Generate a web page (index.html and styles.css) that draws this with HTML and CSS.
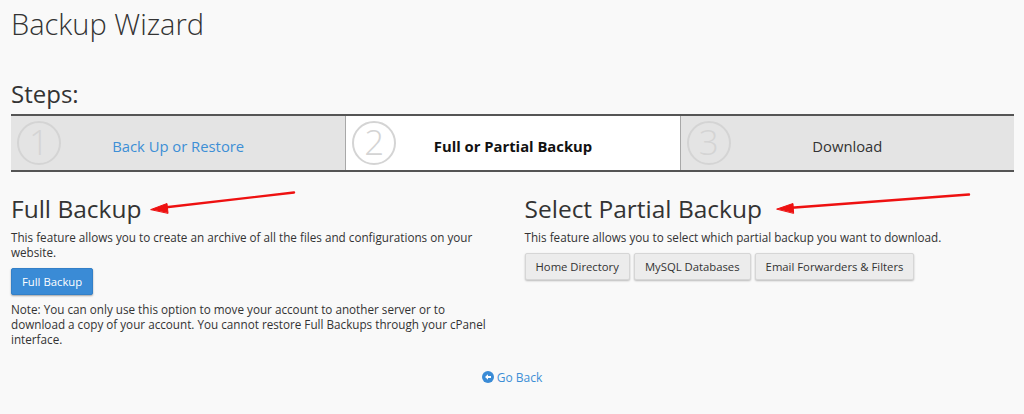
FILE: index.html
```html
<!DOCTYPE html>
<html lang="en">
<head>
<meta charset="utf-8">
<title>Backup Wizard</title>
<link rel="stylesheet" href="styles.css">
</head>
<body>
<div class="page">
  <h1 class="title">Backup Wizard</h1>
  <h2 class="steps-title">Steps:</h2>
  <div class="steps">
    <div class="step">
      <span class="num">1</span>
      <a class="step-label link" href="#">Back Up or Restore</a>
    </div>
    <div class="step active">
      <span class="num">2</span>
      <span class="step-label">Full or Partial Backup</span>
    </div>
    <div class="step">
      <span class="num">3</span>
      <span class="step-label">Download</span>
    </div>
  </div>
  <div class="cols">
    <section class="col">
      <h2 class="sec-title">Full Backup</h2>
      <p class="text">This feature allows you to create an archive of all the files and configurations on your website.</p>
      <button class="btn btn-primary">Full Backup</button>
      <p class="text note">Note: You can only use this option to move your account to another server or to download a copy of your account. You cannot restore Full Backups through your cPanel interface.</p>
    </section>
    <section class="col">
      <h2 class="sec-title">Select Partial Backup</h2>
      <p class="text">This feature allows you to select which partial backup you want to download.</p>
      <div class="btn-row">
        <button class="btn btn-default">Home Directory</button>
        <button class="btn btn-default">MySQL Databases</button>
        <button class="btn btn-default">Email Forwarders &amp; Filters</button>
      </div>
    </section>
  </div>
  <div class="back">
    <a class="link back-link" href="#"><svg class="back-icon" viewBox="0 0 16 16" width="12" height="12"><circle cx="8" cy="8" r="8" fill="#3a8bd6"/><path d="M4 8 L8 4.3 L8 6.6 L12 6.6 L12 9.4 L8 9.4 L8 11.7 Z" fill="#fff"/></svg>Go Back</a>
  </div>
</div>
<svg class="annot" width="1024" height="414" viewBox="0 0 1024 414">
  <g stroke="#ee1111" stroke-width="2.4" fill="#ee1111" stroke-linecap="round">
    <line x1="294" y1="192.5" x2="162" y2="207.8"/>
    <polygon points="151,209.5 167,203.5 168,213" stroke-width="1"/>
    <line x1="969" y1="194.5" x2="788" y2="208"/>
    <polygon points="777,209 793,203.5 793.6,213" stroke-width="1"/>
  </g>
</svg>
</body>
</html>
```
FILE: styles.css
```css
* { box-sizing: border-box; }
html, body { margin: 0; padding: 0; }
body {
  background: #f9f9f9;
  font-family: "Open Sans", "Liberation Sans", sans-serif;
  color: #333;
  width: 1024px;
  height: 414px;
  overflow: hidden;
  position: relative;
}
.page {
  padding: 0 10px 0 11px;
}
.title {
  margin: 0;
  padding-top: 3px;
  font-size: 29px;
  font-weight: 300;
  line-height: 42px;
  color: #333;
}
.steps-title {
  margin: 33px 0 0 0;
  font-size: 24px;
  font-weight: 400;
  line-height: 32px;
  color: #333;
}
.steps {
  margin-top: 4px;
  display: grid;
  grid-template-columns: 1fr 1fr 1fr;
  border-top: 2px solid #555;
  border-bottom: 2px solid #555;
  height: 58px;
}
.step {
  display: grid;
  grid-template-columns: 1fr auto 1fr;
  align-items: center;
  background: #e4e4e4;
  border-left: 1px solid #a8a8a8;
}
.step:first-child { border-left: none; }
.step.active { background: #fff; }
.num {
  grid-column: 1;
  justify-self: start;
  margin-left: 6px;
  width: 44px;
  height: 44px;
  border: 2.5px solid #d4d4d4;
  border-radius: 50%;
  color: #d4d4d4;
  font-size: 35px;
  font-weight: 300;
  line-height: 38px;
  text-align: center;
}
.step-label {
  grid-column: 2;
  font-size: 14.8px;
  color: #333;
  padding-top: 6px;
}
.step.active .step-label { font-weight: 700; color: #111; }
.link { color: #3d8fd6; text-decoration: none; }
.cols {
  display: grid;
  grid-template-columns: 1fr 1fr;
  column-gap: 24px;
  margin-top: 20px;
}
.sec-title {
  margin: 0;
  font-size: 24.5px;
  font-weight: 400;
  line-height: 34px;
  color: #333;
}
.text {
  margin: 4px 0 0 0;
  font-size: 11.7px;
  line-height: 15px;
  color: #333;
}
.btn {
  font-family: inherit;
  font-size: 11.3px;
  height: 27px;
  padding: 0 10px;
  border-radius: 2px;
  cursor: pointer;
}
.btn-primary {
  margin-top: 8px;
  background: #3a8bd6;
  color: #fff;
  border: 1px solid #3380c8;
  box-shadow: 0 1px 2px rgba(0,0,0,0.35);
}
.note { margin-top: 7px; }
.btn-row {
  display: flex;
  gap: 4px;
  margin-top: 8px;
}
.btn-default {
  background: #ececec;
  color: #333;
  border: 1px solid #d6d6d6;
  box-shadow: 0 1px 2px rgba(0,0,0,0.25);
}
.back {
  text-align: center;
  margin-top: 19px;
  padding-right: 1px;
}
.back-link {
  font-size: 12px;
  display: inline-flex;
  align-items: center;
  gap: 3px;
}
.annot {
  position: absolute;
  left: 0;
  top: 0;
  pointer-events: none;
}
```
